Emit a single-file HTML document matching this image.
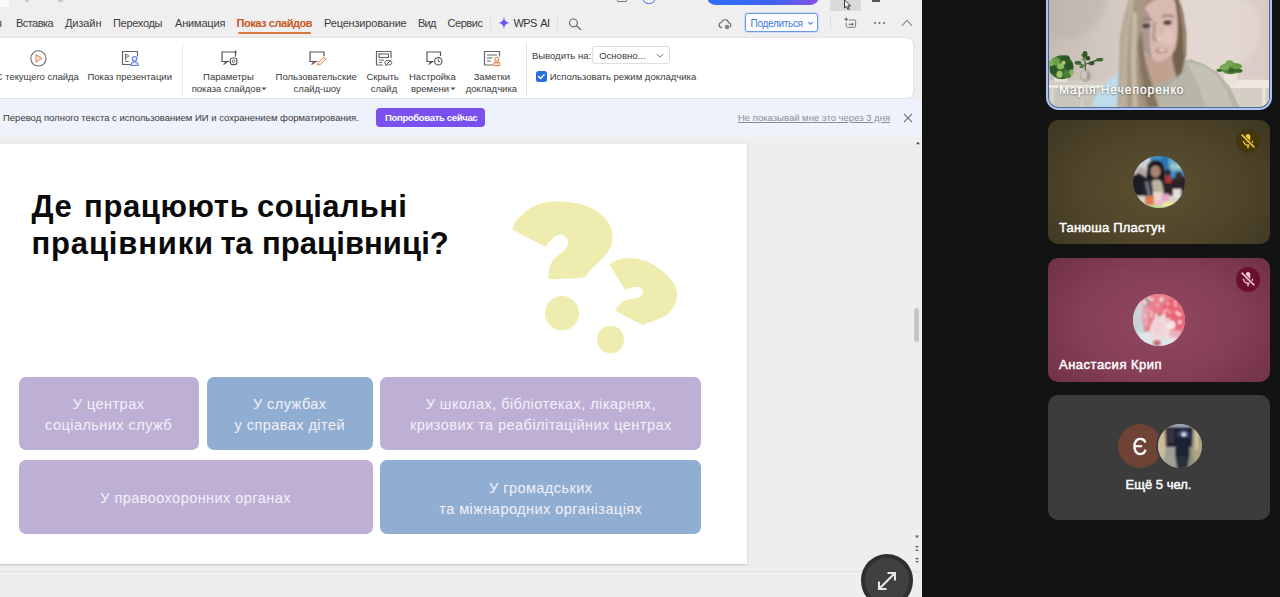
<!DOCTYPE html>
<html>
<head>
<meta charset="utf-8">
<style>
*{box-sizing:border-box;margin:0;padding:0}
html,body{width:1280px;height:597px;overflow:hidden;background:#131313;font-family:"Liberation Sans",sans-serif;}
.abs{position:absolute}
#share{position:absolute;left:0;top:0;width:921.500px;height:597px;background:#eeeeee;overflow:hidden}
#tabs{position:absolute;left:0;top:0;width:921px;height:38px;background:#efefef}
.tab{position:absolute;top:17.400px;font-size:11px;line-height:13px;color:#3d3d3d;white-space:nowrap;letter-spacing:-0.1px}
#ribbon{position:absolute;left:-10px;top:38px;width:923px;height:60px;background:#fff;border-radius:6px;box-shadow:0 0 2.500px rgba(0,0,0,.14)}
.rl{position:absolute;font-size:9.5px;line-height:12px;color:#3a3a3a;white-space:nowrap;text-align:center;transform:translateX(-50%)}
#banner{position:absolute;left:0;top:99px;width:921px;height:37.500px;background:#edf2fc}
#slide{position:absolute;left:0;top:143.700px;width:747.200px;height:420.300px;background:#fff;box-shadow:0 1px 2px rgba(0,0,0,.2)}
.card{position:absolute;border-radius:7px;color:#f4f0f8;font-size:14.500px;line-height:20.600px;padding-top:3.400px;text-align:center;display:flex;align-items:center;justify-content:center;letter-spacing:.45px}
.w{position:absolute;top:0}
.pu{background:#beb0d5}
.bl{background:#90aed2}
.tile{position:absolute;left:1048px;width:222px;border-radius:10px;overflow:hidden}
.nm{position:absolute;left:11px;font-size:13px;font-weight:normal;-webkit-text-stroke:.45px #fff;color:#fff;white-space:nowrap}
</style>
</head>
<body>
<div id="share">
  <div id="tabs">
    <div class="abs" style="left:0;top:0;width:9px;height:7px;background:#fafafa;border-radius:0 0 2px 0"></div>
    <div class="abs" style="left:707px;top:-12px;width:112px;height:17px;border-radius:9px;background:linear-gradient(90deg,#2f6df6 0%,#3f63f3 60%,#8b4fe6 100%)"></div>
    <div class="abs" style="left:830px;top:0;width:31px;height:11px;background:#d9d9d9"></div>
    <div class="abs" style="left:642px;top:-9.500px;width:13.500px;height:13.500px;border-radius:50%;border:1.800px solid #5468dc"></div>
    <div class="abs" style="left:617px;top:-8px;width:10px;height:9.500px;border:1.300px solid #777;border-radius:1px"></div>
    <div class="abs" style="left:25px;top:0;width:4px;height:1.500px;background:#c9c9c9"></div>
    <div class="abs" style="left:58px;top:0;width:5px;height:1.500px;background:#c9c9c9"></div>
    <svg class="abs" style="left:843px;top:0" width="10" height="11" viewBox="0 0 10 11"><path d="M1.5 0 L1.5 8 L3.6 6.2 L5 9.6 L6.3 9 L4.9 5.8 L7.6 5.8 Z" fill="#fff" stroke="#222" stroke-width="0.9"/></svg>
    <div class="abs" style="left:872px;top:0;width:8px;height:2px;background:#555"></div>
    <div class="tab" style="left:-4px">я</div>
    <div class="tab" style="left:16px;letter-spacing:-.55px">Вставка</div>
    <div class="tab" style="left:65px">Дизайн</div>
    <div class="tab" style="left:113px;letter-spacing:-.3px">Переходы</div>
    <div class="tab" style="left:175px;letter-spacing:-.18px">Анимация</div>
    <div class="tab" style="left:236.500px;letter-spacing:-.44px;font-weight:bold;color:#c5581a">Показ слайдов</div>
    <div class="abs" style="left:238px;top:32px;width:73px;height:2px;background:#d9773f;border-radius:1px"></div>
    <div class="tab" style="left:324px;letter-spacing:-.17px">Рецензирование</div>
    <div class="tab" style="left:418px;letter-spacing:-.75px">Вид</div>
    <div class="tab" style="left:447.500px;letter-spacing:-.45px">Сервис</div>
    <div class="abs" style="left:490px;top:16px;width:1px;height:14px;background:#dcdcdc"></div>
    <svg class="abs" style="left:497.500px;top:16px" width="12" height="14" viewBox="0 0 12 14"><defs><linearGradient id="sg" x1="0" y1="0" x2="1" y2="1"><stop offset="0" stop-color="#b04be8"/><stop offset=".5" stop-color="#6a4df0"/><stop offset="1" stop-color="#3f7af5"/></linearGradient></defs><path d="M6 0.500 C6.500 4.300 7.300 5.800 11.500 6.800 C7.300 7.800 6.500 9.500 6 13.500 C5.500 9.500 4.700 7.800 0.500 6.800 C4.700 5.800 5.500 4.300 6 0.500Z" fill="url(#sg)"/></svg>
    <div class="tab" style="left:513.500px;letter-spacing:-.62px;word-spacing:1.700px;color:#333">WPS AI</div>
    <div class="abs" style="left:557px;top:16px;width:1px;height:14px;background:#dcdcdc"></div>
    <svg class="abs" style="left:568px;top:17.800px" width="14" height="12.500" viewBox="0 0 15 13.500"><circle cx="5.800" cy="5.300" r="4.200" fill="none" stroke="#666" stroke-width="1.300"/><path d="M9 8.300 L13.800 12.600" stroke="#666" stroke-width="1.500" stroke-linecap="round"/></svg>
    <svg class="abs" style="left:718px;top:17.500px" width="14" height="12.500" viewBox="0 0 16 15"><path d="M4.500 11.500 C2.300 11.500 1 10 1 8.300 C1 6.600 2.300 5.400 3.800 5.300 C4.300 3.200 6 2 8 2 C10.300 2 12 3.600 12.200 5.600 C13.800 5.800 15 7 15 8.600 C15 9.600 14.600 10.400 14 10.900" fill="none" stroke="#666" stroke-width="1.300"/><circle cx="10.500" cy="10.800" r="2.700" fill="#808080"/></svg>
    <div class="abs" style="left:745px;top:13px;width:73px;height:19px;border:1.200px solid #6b97e4;border-radius:3px;background:#fdfeff;box-shadow:0 0 0 1px #cddbf5"></div>
    <div class="tab" style="left:750.500px;top:17px;color:#3f78dc;font-size:10px;letter-spacing:-.3px">Поделиться</div>
    <svg class="abs" style="left:807px;top:20.500px" width="7" height="5" viewBox="0 0 7 5"><path d="M1.500 1.200 L3.500 3.300 L5.500 1.200" fill="none" stroke="#3b77d8" stroke-width="1.100"/></svg>
    <div class="abs" style="left:830px;top:16px;width:1px;height:14px;background:#dcdcdc"></div>
    <svg class="abs" style="left:844px;top:17.300px" width="13" height="12" viewBox="0 0 15 14"><path d="M5.5 3.5 H12 a1.5 1.5 0 0 1 1.500 1.5 V10.500 a1.500 1.500 0 0 1 -1.500 1.500 H4 a1.500 1.500 0 0 1 -1.500 -1.500 V7" fill="none" stroke="#666" stroke-width="1"/><path d="M2.500 0.500 V5 M0.300 2.700 H4.700" stroke="#555" stroke-width="1.1"/><path d="M5.500 8.500 H10.500 M9 7 L10.700 8.500 L9 10" stroke="#555" stroke-width="1.1" fill="none"/></svg>
    <div class="abs" style="left:873.500px;top:22px;width:2.200px;height:2.200px;border-radius:50%;background:#666;box-shadow:4.500px 0 0 #666,9px 0 0 #666"></div>
    <svg class="abs" style="left:900.500px;top:19px" width="12" height="8" viewBox="0 0 13 9"><path d="M1 7.500 L6.500 1.500 L12 7.500" fill="none" stroke="#888" stroke-width="1.200"/></svg>
  </div>
  <div id="ribbon"><div style="position:absolute;left:10px;top:0;width:913px;height:60px">
    <!-- icon1 play -->
    <svg class="abs" style="left:29px;top:11px" width="19" height="19" viewBox="0 0 19 19"><circle cx="9.4" cy="9.4" r="7.6" fill="none" stroke="#6b6b6b" stroke-width="1.1"/><path d="M7 5.8 L13 9.4 L7 13 Z" fill="#fbe3d2" stroke="#dd9468" stroke-width="1.1" stroke-linejoin="round"/></svg>
    <div class="rl" style="left:37.300px;top:33px;letter-spacing:-.06px">С текущего слайда</div>
    <!-- icon2 presenter -->
    <svg class="abs" style="left:121px;top:12px" width="19" height="18" viewBox="0 0 19 18"><path d="M10 14.500 H1.500 V1.500 H16.500 V6.500" fill="none" stroke="#666" stroke-width="1.200"/><path d="M4.500 4 L8 6 L4.500 8 Z M4.500 8 V10.500 M4.500 11.500 H7.500" fill="none" stroke="#666" stroke-width="1"/><circle cx="13.500" cy="8.800" r="2.300" fill="#e7edfb" stroke="#5b82d8" stroke-width="1.100"/><path d="M9.800 15.500 C9.800 12.800 11.500 12 13.500 12 C15.500 12 17.200 12.800 17.200 15.500 Z" fill="#e7edfb" stroke="#5b82d8" stroke-width="1.100"/></svg>
    <div class="rl" style="left:129.700px;top:33px">Показ презентации</div>
    <div class="abs" style="left:181.500px;top:4px;width:1px;height:54px;background:#ececec"></div>
    <!-- icon3 settings -->
    <svg class="abs" style="left:220px;top:12px" width="19" height="18" viewBox="0 0 19 18"><path d="M9.500 11.500 H2 V2 H15.500 V6.500 M15.500 0.500 V3.500 M14 2 H17" fill="none" stroke="#555" stroke-width="1.200"/><path d="M3.500 14.500 L6.500 12.500 L3.500 11.500" fill="none" stroke="#555" stroke-width="1.100"/><rect x="10.300" y="8" width="6.600" height="6.600" rx="2" fill="#fff" stroke="#555" stroke-width="1.100"/><circle cx="13.600" cy="11.300" r="1.300" fill="none" stroke="#555" stroke-width="0.900"/></svg>
    <div class="rl" style="left:228.400px;top:33px">Параметры</div>
    <div class="rl" style="left:226.200px;top:45px">показа слайдов</div>
    <svg class="abs" style="left:260.500px;top:49px" width="6" height="4" viewBox="0 0 6 4"><path d="M0.500 0.500 L3 3.300 L5.500 0.500Z" fill="#555"/></svg>
    <!-- icon4 custom -->
    <svg class="abs" style="left:308px;top:12px" width="20" height="18" viewBox="0 0 20 18"><path d="M9.500 11.500 H2 V2 H16 V6" fill="none" stroke="#555" stroke-width="1.200"/><path d="M3.500 14.500 L6.500 12.500 L3.500 11.500" fill="none" stroke="#555" stroke-width="1.100"/><path d="M9.500 15 L10.200 12.600 L15.800 7 L18 9.200 L12.200 14.600 Z" fill="#fdebe0" stroke="#e08a55" stroke-width="1" stroke-linejoin="round"/></svg>
    <div class="rl" style="left:316.200px;top:33px">Пользовательские</div>
    <div class="rl" style="left:317.200px;top:45px">слайд-шоу</div>
    <!-- icon5 hide -->
    <svg class="abs" style="left:375px;top:12px" width="19" height="18" viewBox="0 0 19 18"><path d="M8 15 H1.500 V1.500 H16 V8" fill="none" stroke="#666" stroke-width="1.200"/><rect x="4" y="4" width="9.500" height="3.500" fill="none" stroke="#666" stroke-width="1.100"/><path d="M4 10 H9 M4 12.500 H7" stroke="#666" stroke-width="1"/><ellipse cx="13.300" cy="12.700" rx="3.600" ry="2.300" fill="none" stroke="#666" stroke-width="1"/><path d="M10 16 L16.500 9.500" stroke="#666" stroke-width="1"/></svg>
    <div class="rl" style="left:382.600px;top:33px">Скрыть</div>
    <div class="rl" style="left:384px;top:45px">слайд</div>
    <!-- icon6 timing -->
    <svg class="abs" style="left:425px;top:12px" width="19" height="18" viewBox="0 0 19 18"><path d="M8.500 11.500 H2 V2 H15.500 V6" fill="none" stroke="#555" stroke-width="1.200"/><path d="M3.500 14.500 L6.500 12.500 L3.500 11.500" fill="none" stroke="#555" stroke-width="1.100"/><circle cx="13.300" cy="11.300" r="3.700" fill="#fff" stroke="#555" stroke-width="1.100"/><path d="M13.300 9.300 V11.500 H15.200" fill="none" stroke="#555" stroke-width="1"/></svg>
    <div class="rl" style="left:432.400px;top:33px">Настройка</div>
    <div class="rl" style="left:430px;top:45px">времени</div>
    <svg class="abs" style="left:450px;top:49px" width="6" height="4" viewBox="0 0 6 4"><path d="M0.500 0.500 L3 3.300 L5.500 0.500Z" fill="#555"/></svg>
    <!-- icon7 notes -->
    <svg class="abs" style="left:483px;top:12px" width="19" height="18" viewBox="0 0 19 18"><path d="M10 15 H1.500 V1.500 H16.500 V6.500" fill="none" stroke="#666" stroke-width="1.200"/><path d="M4 5 H14 M4 8 H9.500 M4 11 H8" stroke="#666" stroke-width="1.100"/><circle cx="13.800" cy="9.300" r="2" fill="#fdebe0" stroke="#e08a55" stroke-width="1.100"/><rect x="10.800" y="12.600" width="6" height="3" rx="0.800" fill="#fdebe0" stroke="#e08a55" stroke-width="1.100"/></svg>
    <div class="rl" style="left:491.800px;top:33px">Заметки</div>
    <div class="rl" style="left:491.400px;top:45px">докладчика</div>
    <div class="abs" style="left:526px;top:4px;width:1px;height:54px;background:#e4e4e4"></div>
    <!-- right controls -->
    <div class="rl" style="left:561.500px;top:11.500px">Выводить на:</div>
    <div class="abs" style="left:592px;top:8px;width:77.500px;height:17.800px;border:1px solid #dedede;border-radius:3px;background:#fff"></div>
    <div class="rl" style="left:622.300px;top:11.500px;font-size:9.500px">Основно...</div>
    <svg class="abs" style="left:656px;top:14.500px" width="8" height="6" viewBox="0 0 8 6"><path d="M1 1.200 L4 4.300 L7 1.200" fill="none" stroke="#777" stroke-width="1"/></svg>
    <div class="abs" style="left:536px;top:33.200px;width:10.700px;height:10.700px;border-radius:2.500px;background:#2a6de0"></div>
    <svg class="abs" style="left:536px;top:33px" width="10.700" height="11" viewBox="0 0 11 11.500"><path d="M2.600 5.800 L4.700 7.900 L8.500 3.800" fill="none" stroke="#fff" stroke-width="1.400" stroke-linecap="round" stroke-linejoin="round"/></svg>
    <div class="rl" style="left:623px;top:33px">Использовать режим докладчика</div>
  </div></div>
  <div id="banner">
    <div class="abs bt" style="left:3px;top:13px;font-size:9.500px;line-height:12px;color:#3a3a3a;white-space:nowrap">Перевод полного текста с использованием ИИ и сохранением форматирования.</div>
    <div class="abs" style="left:376px;top:9.200px;width:108.500px;height:18.700px;border-radius:4px;background:#7a50ee"></div>
    <div class="abs bt" style="left:385px;top:12.800px;font-size:9.500px;letter-spacing:-.33px;line-height:12px;font-weight:bold;color:#fff;white-space:nowrap">Попробовать сейчас</div>
    <div class="abs bt" style="left:738px;top:13px;font-size:9.500px;line-height:12px;color:#8a8e96;white-space:nowrap;text-decoration:underline">Не показывай мне это через 3 дня</div>
    <svg class="abs" style="left:902px;top:13px" width="12" height="12" viewBox="0 0 12 12"><path d="M2 2 L10 10 M10 2 L2 10" stroke="#7a7a7a" stroke-width="1.100"/></svg>
  </div>
<div class="abs" style="left:0;top:571px;width:921px;height:1px;background:#e3e3e3"></div>
  <div class="abs" style="left:914px;top:308px;width:5px;height:34px;border-radius:2.500px;background:#c6c6c6"></div>
  <svg class="abs" style="left:913.500px;top:140px" width="8" height="6" viewBox="0 0 8 6"><path d="M2 4.300 L4 1.800 L6 4.300 Z" fill="#555"/></svg>
  <svg class="abs" style="left:913px;top:533px" width="8" height="36" viewBox="0 0 8 36"><path d="M1.800 2.500 L4 5.300 L6.200 2.500 Z M2 13 L4 15 L6 13 Z M2 18 L4 16 L6 18 Z M2 25 L4 27 L6 25Z M2 28 L4 30 L6 28Z" fill="#666"/></svg>
  <div class="abs" style="left:860.500px;top:554px;width:52.500px;height:52.500px;border-radius:50%;background:#2e2f31"></div>
  <div class="abs" style="left:864.500px;top:558px;width:44.500px;height:44.500px;border-radius:50%;background:#3e4042"></div>
  <svg class="abs" style="left:874px;top:568px" width="26" height="26" viewBox="0 0 26 26"><path d="M5 21 L21 5 M13.500 5 H21 V12.500 M5 13.500 V21 H12.500" fill="none" stroke="#e6e6e6" stroke-width="2.100"/></svg>
  <div id="slide"><div class="abs" style="left:0;top:-.7px;width:747px;height:421px">
    <div class="abs ttl" id="t1" style="left:31.500px;top:44.500px;letter-spacing:.49px;font-size:31px;line-height:37.500px;font-weight:bold;color:#0a0a0a;white-space:nowrap"><span class="w" style="left:0">Де</span><span class="w" style="left:52.550px;letter-spacing:.61px">працюють</span><span class="w" style="left:225.600px;letter-spacing:.33px">соціальні</span></div>
    <div class="abs ttl" id="t2" style="left:31.500px;top:82px;letter-spacing:.29px;font-size:31px;line-height:37.500px;font-weight:bold;color:#0a0a0a;white-space:nowrap"><span class="w" style="left:0;letter-spacing:.85px">працівники</span><span class="w" style="left:188.900px;letter-spacing:-.3px">та</span><span class="w" style="left:230.400px;letter-spacing:.09px">працівниці?</span></div>
    <svg class="abs" style="left:490px;top:37px" width="220" height="190" viewBox="490 180 220 190">
      <g fill="#efecb0">
        <path d="M512.300 229.400 C514 223 517 218.500 521.800 215 C531 206 542 202 553.700 201.600 C565 201 576 202 585.500 205.500 C597 210 605 216 609.400 224.600 C612 230 613 235 612.600 240.500 C611.500 248 607 254 601.500 259.600 C595 266 589 271 585.500 277.100 C574 279 560 279.300 548.300 278.700 C548.500 273 549 268 550.500 264.400 C552.500 260 555 257.500 558.500 254.800 C563 251.500 567 248.500 568 243.700 C568.500 239 566 236 561.700 234.800 C558 234.300 554.500 236 552.100 238.900 C549.500 241.500 547.500 244 545.700 246.900 Z"/>
        <ellipse cx="562" cy="313.300" rx="17" ry="17.300"/>
        <path d="M609.400 264.400 C616 260 622 258 630 258 C640 258 648 261 655.600 266 C664 271.500 670.500 277.500 674.700 285 C677.500 290.500 677.800 296 676.300 301 C674.500 306.500 671 311 666.700 315.300 C659 319 651 322.500 642.800 324.900 C633 320.500 624 316 615.200 310.500 C617.500 306.500 620 303.500 623.800 301 C628 299 633 299 638 297.800 C641.500 296.500 643.500 294.500 642.900 291.400 C642.300 288.500 640 287 636.500 286.700 C632.500 286.700 629 288 625.300 289.900 Z"/>
        <ellipse cx="610.500" cy="339.500" rx="13.500" ry="13.800"/>
      </g>
    </svg>
    <div class="card pu" style="left:18.600px;top:233.500px;width:180px;height:73.500px"><div><span class="cl">У центрах</span><br><span class="cl">соціальних служб</span></div></div>
    <div class="card bl" style="left:207px;top:233.500px;width:165.500px;height:73.500px"><div><span class="cl">У службах</span><br><span class="cl">у справах дітей</span></div></div>
    <div class="card pu" style="left:380.300px;top:233.500px;width:321px;height:73.500px"><div><span class="cl">У школах, бібліотеках, лікарнях,</span><br><span class="cl">кризових та реабілітаційних центрах</span></div></div>
    <div class="card pu" style="left:18.600px;top:317.300px;width:354px;height:73.500px"><div><span class="cl">У правоохоронних органах</span></div></div>
    <div class="card bl" style="left:380.300px;top:317.300px;width:321px;height:73.500px"><div><span class="cl">У громадських</span><br><span class="cl">та міжнародних організаціях</span></div></div>
  </div></div>
</div>
<div id="right">
  <!-- video tile -->
  <div class="abs" style="left:1045.500px;top:-12px;width:226.700px;height:121.700px;border-radius:12.500px;background:#adc3f5"></div>
  <div class="abs" style="left:1048.500px;top:-12px;width:220.700px;height:119px;border-radius:10px;overflow:hidden;background:#d8cac2;box-shadow:0 0 0 .8px #3a4a78">
    <svg width="221" height="119" viewBox="1048.500 -12 221 118.500" style="position:absolute;left:0;top:0">
      <defs>
        <linearGradient id="wall" x1="0" x2="1" y1="0" y2="0"><stop offset="0" stop-color="#c6bcb4"/><stop offset=".35" stop-color="#d6ccc5"/><stop offset=".75" stop-color="#e0d4cd"/><stop offset="1" stop-color="#d8cbc4"/></linearGradient>
        <filter id="b1" x="-20%" y="-20%" width="140%" height="140%"><feGaussianBlur stdDeviation="1.100"/></filter>
        <filter id="b2" x="-20%" y="-20%" width="140%" height="140%"><feGaussianBlur stdDeviation="2.200"/></filter>
        <filter id="b05" x="-20%" y="-20%" width="140%" height="140%"><feGaussianBlur stdDeviation="0.600"/></filter>
      </defs>
      <rect x="1048" y="-12" width="222" height="120" fill="url(#wall)"/>
      <g id="vid">
        <!-- wall shading -->
        <ellipse cx="1060" cy="0" rx="45" ry="40" fill="#bdb2a9" opacity=".5" filter="url(#b2)"/>
        <ellipse cx="1215" cy="30" rx="45" ry="40" fill="#e6dbd5" opacity=".6" filter="url(#b2)"/>
        <!-- shelf left -->
        <g filter="url(#b05)">
        <rect x="1048" y="80" width="76" height="5.500" fill="#d3ccc4"/>
        <rect x="1048" y="85" width="60" height="2.600" fill="#f3efe9"/>
        <rect x="1048" y="87.600" width="76" height="20" fill="#cac5bb"/>
        <rect x="1050" y="87.600" width="3" height="20" fill="#dad6ce"/>
        <rect x="1080" y="87.600" width="3" height="20" fill="#d2cec6"/>
        <!-- shelf right -->
        <rect x="1230" y="79.500" width="40" height="8.500" fill="#efe7de"/>
        <rect x="1230" y="88" width="40" height="19" fill="#d4cec4"/>
        <rect x="1262" y="88" width="3" height="19" fill="#ece6de"/>
        </g>
        <!-- plants left -->
        <g filter="url(#b05)">
          <path d="M1053 76 H1067.500 L1066 81.500 H1054.500 Z" fill="#e6e3dd"/>
          <ellipse cx="1061" cy="67" rx="12" ry="12" fill="#3d6a30"/>
          <ellipse cx="1055" cy="61" rx="4.500" ry="4" fill="#6f9e4c"/>
          <ellipse cx="1065" cy="58.500" rx="4.500" ry="3.500" fill="#2f5726"/>
          <ellipse cx="1068.500" cy="66" rx="4" ry="4.500" fill="#2c5224"/>
          <ellipse cx="1060" cy="66" rx="3.500" ry="3" fill="#8fbb60"/>
          <ellipse cx="1053" cy="70" rx="3.500" ry="4.500" fill="#2f5726"/>
          <ellipse cx="1059" cy="74" rx="3" ry="3.500" fill="#9cc468"/>
          <ellipse cx="1067" cy="74" rx="4" ry="4" fill="#4d7d38"/>
          <ellipse cx="1050.500" cy="63" rx="2.500" ry="3" fill="#7fae55"/>
          <ellipse cx="1063" cy="62.500" rx="2" ry="2" fill="#a4cb70"/>
          <ellipse cx="1071" cy="72" rx="2.200" ry="3" fill="#86b45a"/>
          <ellipse cx="1085" cy="75.500" rx="6" ry="6.500" fill="#b9b0a8"/>
          <ellipse cx="1083.500" cy="74.500" rx="2.500" ry="4" fill="#d0c8c0"/>
          <ellipse cx="1088" cy="76" rx="1.500" ry="3.500" fill="#a59c94"/>
          <path d="M1085 70 L1084 53 M1085 66 L1076 62 M1085 64 L1097 60 M1085 60 L1081 54 M1090 62 L1102 58" stroke="#3d5a34" stroke-width="1.200" fill="none"/>
          <ellipse cx="1084.500" cy="54" rx="2.500" ry="3.200" fill="#33592c"/>
          <ellipse cx="1077.500" cy="62.500" rx="3.500" ry="2" fill="#3f6a34"/>
          <ellipse cx="1091" cy="63" rx="3" ry="2" fill="#33592c"/>
          <ellipse cx="1099" cy="59.500" rx="3.800" ry="1.800" fill="#3f6a34"/>
          <ellipse cx="1087.500" cy="58" rx="2.200" ry="2.200" fill="#2c4f26"/>
          <ellipse cx="1081" cy="66.500" rx="2.200" ry="1.600" fill="#4a7a3a"/>
          <ellipse cx="1083" cy="59" rx="1.800" ry="1.600" fill="#6a9a4c"/>
        </g>
        <!-- plant right -->
        <g filter="url(#b05)">
          <path d="M1223 74 H1237 L1235.500 84 H1224.500 Z" fill="#e9e3db"/>
          <ellipse cx="1230" cy="68" rx="9" ry="6" fill="#4f8038"/>
          <ellipse cx="1224" cy="67" rx="5" ry="3" fill="#7aaa58"/>
          <ellipse cx="1236" cy="66" rx="5.500" ry="3" fill="#6a9a4a"/>
          <ellipse cx="1229" cy="63" rx="4" ry="3" fill="#74a552"/>
          <ellipse cx="1238" cy="70.500" rx="4" ry="2" fill="#3f6a30"/>
          <ellipse cx="1219" cy="70" rx="3" ry="1.600" fill="#3f6a30"/>
          <ellipse cx="1231" cy="70" rx="3" ry="2" fill="#376029"/>
        </g>
        <!-- blue cloth -->
        <path d="M1090 107 L1097 92 L1108 80 L1120 71 L1126 107 Z" fill="#bedcec" filter="url(#b1)"/>
        <!-- sweater -->
        <g filter="url(#b05)">
          <path d="M1122 107 L1122 84 L1132 74 L1150 78 L1178 62 L1190 59 L1204 64 L1218 73 L1230 88 L1239 107 Z" fill="#b7b6a7"/>
          <path d="M1186 62 L1204 66 L1216 75 L1226 90 L1232 107 L1205 107 L1196 80 Z" fill="#c5c5b9" opacity=".8"/>
          <path d="M1150 80 L1180 64 L1186 70 L1160 92 Z" fill="#aaa99a" opacity=".7"/>
        </g>
        <!-- neck -->
        <path d="M1141 55 L1176 52 L1181 66 L1168 80 L1152 86 L1143 76 Z" fill="#c3a191" filter="url(#b1)"/>
        <!-- hair back right -->
        <path d="M1160 -12 L1174 -12 L1181 8 L1185 32 L1185 56 L1181 72 L1176 77 L1172 60 Z" fill="#75604e" filter="url(#b1)"/>
        <path d="M1178 0 L1183 14 L1185.500 36 L1185 56 L1183 56 L1182 30 Z" fill="#9c8772" filter="url(#b1)"/>
        <!-- face -->
        <g filter="url(#b1)">
          <path d="M1139 -6 C1150 -12 1170 -10 1175 2 C1178 18 1178.500 36 1175 48 C1171 57 1166 62 1160 62.500 C1152 62.500 1145 57 1141 46 C1138 30 1137.500 10 1139 -6Z" fill="#d9bab0"/>
          <path d="M1139 0 C1141 8 1150 10 1150 20 C1149 34 1149 50 1152 60 C1146 56 1142.500 50 1141 44 C1138 30 1137.500 12 1139 0Z" fill="#ab9891"/>
          <path d="M1139 -8 C1150 -13 1168 -12 1175 0 C1168 -5 1160 -3 1152 1 C1146 4 1142 9 1139 14 Z" fill="#a48e76"/>
          <ellipse cx="1168" cy="36" rx="6" ry="9" fill="#e2c5bb" opacity=".8"/>
        </g>
        <g filter="url(#b1)">
          <path d="M1141 20.500 Q1146 17.500 1151.500 19.500" stroke="#8a7264" stroke-width="1.500" fill="none"/>
          <path d="M1161.500 16.500 Q1167.500 13.800 1173.500 16.500" stroke="#8a7264" stroke-width="1.500" fill="none"/>
          <ellipse cx="1145.500" cy="25.500" rx="4" ry="2.100" fill="#4a3c3a"/>
          <ellipse cx="1167" cy="22.300" rx="4" ry="2.100" fill="#4a3c3a"/>
          <path d="M1154 22 L1153 38 L1156 41" stroke="#a8968f" stroke-width="2.600" fill="none"/>
          <ellipse cx="1159" cy="38" rx="2.500" ry="2.500" fill="#e4cbc2"/>
          <ellipse cx="1160.800" cy="50.300" rx="6" ry="2.800" fill="#b98880"/>
          <ellipse cx="1161.300" cy="49.800" rx="3.600" ry="1.200" fill="#e6d4ce"/>
          <path d="M1150 60 Q1160 66 1172 56" stroke="#b2958a" stroke-width="2" fill="none" opacity=".7"/>
        </g>
        <!-- hair front left -->
        <g filter="url(#b1)">
          <path d="M1134 -12 L1150 -12 L1146 0 L1141.500 16 L1140.500 40 L1144 60 L1152 80 L1158 107 L1117 107 L1118 80 L1120 36 L1124 14 L1128 0 Z" fill="#a69783"/>
          <path d="M1127 2 L1122 30 L1119 70 L1118 107 L1127 107 L1127 60 L1130 22 L1135 -8 Z" fill="#bbae9a"/>
          <path d="M1141 30 L1145 62 L1154 96 L1158 107 L1147 107 L1140 72 L1137.500 42 Z" fill="#857461"/>
          <path d="M1132 10 L1130 60 L1132 107 L1137 107 L1135.500 60 L1137 14 Z" fill="#c9bdaa" opacity=".85"/>
          <path d="M1137 40 L1140 74 L1146 107 L1142 107 L1137.500 76 Z" fill="#9b8b77" opacity=".9"/>
        </g>
      </g>
    </svg>
    <div class="abs" id="vname" style="left:10.500px;top:94.800px;letter-spacing:.96px;font-size:12px;line-height:15px;color:#fff;white-space:nowrap;-webkit-text-stroke:.45px #fff;text-shadow:0 0 2px rgba(0,0,0,.6),0 1px 1.500px rgba(0,0,0,.4)">Марія Нечепоренко</div>
  </div>
  <!-- tile 2 -->
  <div class="tile" style="top:120.100px;height:124.400px;background:radial-gradient(ellipse 72% 88% at 50% 56%,#5d5031 0%,#51462b 48%,#3a3421 100%)">
    <div class="abs av" id="av2" style="left:84.500px;top:36px;width:52px;height:52px;border-radius:50%;overflow:hidden;background:#5a7fa8"><svg width="52" height="52" viewBox="0 0 52 52" style="position:absolute;left:0;top:0"><defs><filter id="ab" x="-10%" y="-10%" width="120%" height="120%"><feGaussianBlur stdDeviation="0.900"/></filter></defs><g filter="url(#ab)">
      <rect x="-2" y="-2" width="56" height="56" fill="#3c8cc4"/>
      <rect x="-2" y="-2" width="19" height="26" fill="#cdd3d6"/>
      <ellipse cx="8" cy="17" rx="5" ry="6" fill="#b9a9a6"/>
      <rect x="28" y="-2" width="7" height="20" fill="#2a76ae"/>
      <rect x="36" y="2" width="18" height="14" fill="#66aac8"/>
      <rect x="38" y="8" width="12" height="5" fill="#9fc9c6"/>
      <path d="M-2 20 L6 17 L14 22 L22 30 L22 44 L-2 44 Z" fill="#1d1e24"/>
      <path d="M14 12 C14 3 29 1 31 11 L33 28 L26 30 L16 28 L13 24 Z" fill="#1a181c"/>
      <ellipse cx="22.500" cy="15.500" rx="5" ry="6" fill="#a98470"/>
      <path d="M17 28 C19 22 28 22 30 28 L31 42 L17 42 Z" fill="#b9b4a0"/>
      <path d="M9 24 L18 22 L21 42 L8 44 Z" fill="#23242c"/>
      <path d="M12 26 L15 25 L18 40 L15 41 Z" fill="#6f7686"/>
      <path d="M28 24 L36 26 L40 22 L54 20 L54 38 L32 40 Z" fill="#2a2226"/>
      <ellipse cx="35" cy="16.500" rx="3" ry="3.500" fill="#3a2826"/>
      <rect x="32" y="20" width="6.500" height="7" fill="#a8383c"/>
      <ellipse cx="46" cy="20" rx="3.500" ry="4.500" fill="#3a2c28"/>
      <rect x="-2" y="40" width="56" height="16" fill="#d9d2c6"/>
      <rect x="40" y="33" width="8" height="9" fill="#e4dfd6"/>
      <rect x="20" y="36" width="9" height="8" fill="#e8d8cc"/>
      <rect x="28" y="38" width="8" height="7" fill="#e9a6c4"/>
      <rect x="12" y="40" width="9" height="9" fill="#dd7a52"/>
      <rect x="22" y="45" width="10" height="6" fill="#f0b8d4"/>
      <rect x="30" y="46" width="12" height="5" fill="#ece69a"/>
      <rect x="16" y="49" width="14" height="5" fill="#c4dc8a"/>
    </g></svg></div>
    <div class="abs" style="left:187.500px;top:8.800px;width:24.500px;height:24.500px;border-radius:50%;background:#43370b"></div>
    <svg class="abs mic" style="left:190.800px;top:12px" width="18" height="18" viewBox="0 0 24 24"><g fill="#f2cc35"><path d="M12 14.500 c1.660 0 3-1.340 3-3 V5.500 c0-1.660-1.340-3-3-3 s-3 1.340-3 3 v6 c0 1.660 1.340 3 3 3z"/><path d="M17.300 11.500 c0 3-2.540 5.100-5.300 5.100 s-5.300-2.100-5.300-5.100 H5 c0 3.410 2.720 6.230 6 6.720 V21.500 h2 v-3.280 c3.280-.48 6-3.300 6-6.720 z"/></g><path d="M3.500 3.500 L20.500 20.500" stroke="#43370b" stroke-width="4.200"/><path d="M3.500 3.500 L20.500 20.500" stroke="#f2cc35" stroke-width="1.900"/></svg>
    <div class="nm" style="top:100px;letter-spacing:.2px">Танюша Пластун</div>
  </div>
  <!-- tile 3 -->
  <div class="tile" style="top:258px;height:123.500px;background:radial-gradient(ellipse 72% 88% at 50% 52%,#91485f 0%,#863f58 48%,#6b2c45 100%)">
    <div class="abs av" id="av3" style="left:84.500px;top:35.500px;width:52px;height:52px;border-radius:50%;overflow:hidden;background:#e6a0a8"><svg width="52" height="52" viewBox="0 0 52 52" style="position:absolute;left:0;top:0"><g filter="url(#ab)">
      <rect x="-2" y="-2" width="56" height="56" fill="#e77f8e"/>
      <ellipse cx="42" cy="20" rx="14" ry="16" fill="#ea6474"/>
      <rect x="-2" y="-2" width="13" height="44" fill="#c4d8da"/>
      <rect x="9" y="-2" width="6" height="34" fill="#e3a4ae"/>
      <rect x="12" y="4" width="4" height="8" fill="#8a8e96"/>
      <g fill="#f2b8c2"><circle cx="4" cy="14" r="2"/><circle cx="7" cy="24" r="2"/><circle cx="3" cy="30" r="1.800"/><circle cx="8" cy="8" r="1.500"/></g>
      <g fill="#fbe6e8"><circle cx="19.4" cy="5.3" r="1.2"/><circle cx="16.2" cy="4.1" r="1.2"/><circle cx="46.7" cy="27.6" r="1.5"/><circle cx="18.9" cy="19.2" r="1.1"/><circle cx="16.9" cy="5.4" r="1.1"/><circle cx="47.1" cy="28.5" r="1.5"/><circle cx="42.0" cy="8.2" r="1.1"/><circle cx="35.1" cy="25.4" r="1.6"/><circle cx="45.2" cy="4.8" r="1.4"/><circle cx="36.9" cy="18.2" r="1.0"/><circle cx="28.9" cy="4.9" r="1.6"/><circle cx="44.6" cy="19.5" r="1.1"/><circle cx="46.4" cy="20.3" r="1.6"/><circle cx="43.9" cy="18.3" r="1.2"/><circle cx="34.0" cy="15.8" r="1.0"/><circle cx="22.2" cy="28.0" r="0.9"/><circle cx="11.9" cy="22.0" r="1.1"/><circle cx="31.4" cy="17.1" r="1.2"/><circle cx="49.9" cy="8.3" r="1.2"/><circle cx="18.1" cy="22.2" r="1.1"/><circle cx="24.2" cy="25.9" r="1.2"/><circle cx="32.3" cy="30.9" r="1.0"/><circle cx="12.5" cy="9.3" r="1.5"/><circle cx="34.6" cy="9.6" r="1.2"/><circle cx="17.1" cy="16.7" r="0.9"/><circle cx="37.9" cy="30.7" r="1.7"/><circle cx="39.4" cy="32.7" r="0.9"/><circle cx="21.6" cy="32.9" r="1.5"/><circle cx="26.4" cy="32.2" r="1.4"/><circle cx="42.7" cy="11.4" r="1.1"/><circle cx="27.8" cy="6.4" r="1.2"/><circle cx="48.5" cy="12.6" r="0.9"/><circle cx="11.8" cy="7.4" r="1.5"/><circle cx="24.5" cy="11.3" r="1.0"/></g>
      <ellipse cx="22" cy="47" rx="24" ry="10" fill="#dbe7ea"/>
      <path d="M17 46 C15 36 19 28 22 24 L22 19 L25 21.500 L29 21 L32 18 L32.500 24 C35 30 35 36 39 38 L42 46 Z" fill="#efdcde"/>
      <ellipse cx="26" cy="34" rx="6" ry="9" fill="#f0d2d6"/>
      <ellipse cx="38" cy="31" rx="4.500" ry="4.500" fill="#f6e6e8"/>
      <ellipse cx="26.500" cy="21.500" rx="1.300" ry="1" fill="#6a4a58"/>
      <ellipse cx="24" cy="49" rx="4" ry="3" fill="#c46a6a"/>
      <ellipse cx="42" cy="40" rx="6" ry="4" fill="#e8b4bc"/>
    </g></svg></div>
    <div class="abs" style="left:187.500px;top:9px;width:24.500px;height:24.500px;border-radius:50%;background:#6b0f31"></div>
    <svg class="abs mic" style="left:190.800px;top:12.200px" width="18" height="18" viewBox="0 0 24 24"><g fill="#f6cbd6"><path d="M12 14.500 c1.660 0 3-1.340 3-3 V5.500 c0-1.660-1.340-3-3-3 s-3 1.340-3 3 v6 c0 1.660 1.340 3 3 3z"/><path d="M17.300 11.500 c0 3-2.540 5.100-5.300 5.100 s-5.300-2.100-5.300-5.100 H5 c0 3.410 2.720 6.230 6 6.720 V21.500 h2 v-3.280 c3.280-.48 6-3.300 6-6.720 z"/></g><path d="M3.500 3.500 L20.500 20.500" stroke="#6b0f31" stroke-width="4.200"/><path d="M3.500 3.500 L20.500 20.500" stroke="#f6cbd6" stroke-width="1.900"/></svg>
    <div class="nm" style="top:99.300px;letter-spacing:.5px">Анастасия Крип</div>
  </div>
  <!-- tile 4 -->
  <div class="tile" style="top:394.500px;height:125px;background:#3c3c3d">
    <div class="abs" style="left:69.800px;top:29.300px;width:44.200px;height:44.200px;border-radius:50%;background:#6f4437"></div>
    <div class="abs" style="left:70px;top:31px;width:43.500px;line-height:43.500px;text-align:center;font-size:23.500px;color:#fff;-webkit-text-stroke:.35px #fff;transform:scaleX(.86)">Є</div>
    <div class="abs" style="left:108px;top:27.300px;width:48px;height:48px;border-radius:50%;background:#3c3c3d"></div>
    <div class="abs av" id="av4" style="left:110px;top:29.300px;width:44px;height:44px;border-radius:50%;overflow:hidden;background:#8a8878"><svg width="44" height="44" viewBox="0 0 44 44" style="position:absolute;left:0;top:0"><g filter="url(#ab)">
      <rect x="-2" y="-2" width="48" height="48" fill="#8e938a"/>
      <rect x="-2" y="-2" width="48" height="6" fill="#a3aab8"/>
      <rect x="6" y="3" width="30" height="20" fill="#1f2330"/>
      <rect x="8" y="5" width="8" height="14" fill="#34363c"/>
      <path d="M-2 -2 L7 -2 L8 26 L5 46 L-2 46 Z" fill="#ccbc9a"/>
      <path d="M46 -2 L35 -2 L34 28 L37 46 L46 46 Z" fill="#aea585"/>
      <rect x="37.500" y="4" width="2.500" height="22" fill="#d2c9a8"/>
      <path d="M8 23 L18 23 L19 46 L4 46 Z" fill="#9da197"/>
      <path d="M30 23 L34 23 L37 46 L28 46 Z" fill="#8b8f80"/>
      <ellipse cx="25.500" cy="11" rx="6" ry="5" fill="#3c4a78"/>
      <path d="M18 16 C18 10 30 10 31 16 L31.500 30 L29 46 L19.500 46 L17 30 Z" fill="#1a2236"/>
      <ellipse cx="25.800" cy="10.500" rx="2.300" ry="2.100" fill="#e6ecfb"/>
      <rect x="20" y="32" width="8.500" height="14" fill="#283238"/>
    </g></svg></div>
    <div class="abs nm4" style="left:0;top:82.200px;width:221px;text-align:center;font-size:13px;font-weight:normal;-webkit-text-stroke:.45px #fff;color:#fff"><span id="more">Ещё 5 чел.</span></div>
  </div>
</div>
</body>
</html>
